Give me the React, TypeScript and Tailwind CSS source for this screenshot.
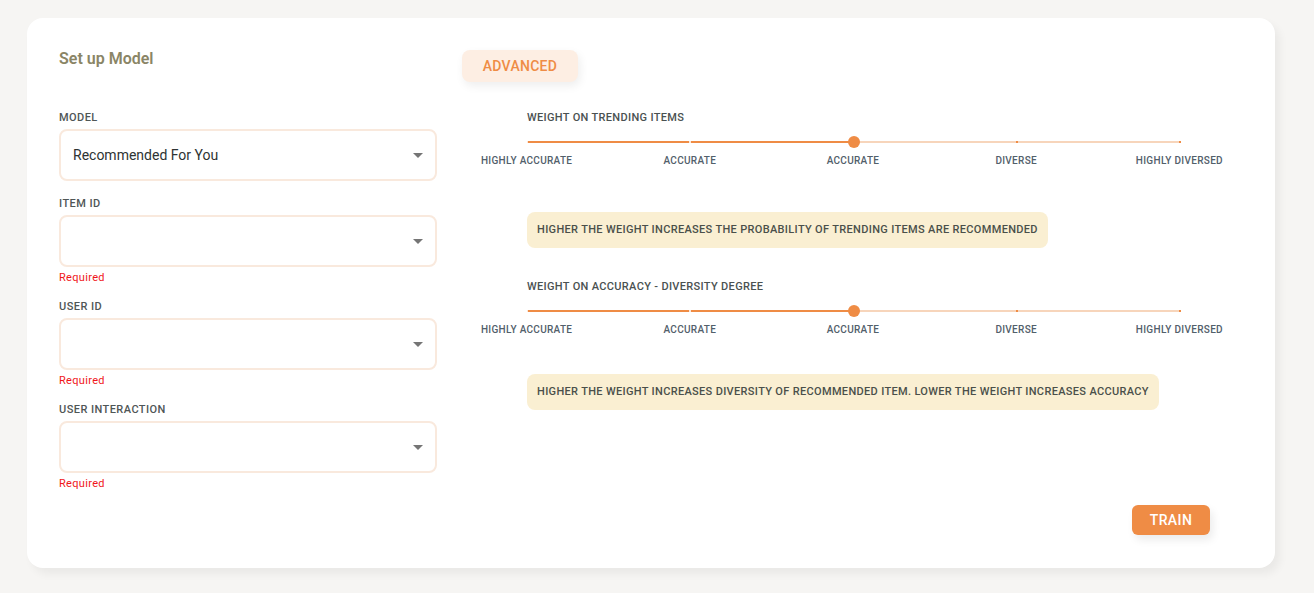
import React from "react";

const font = { fontFamily: "Roboto, 'Noto Sans', sans-serif" };

function Caret() {
  return (
    <svg width="10" height="5" viewBox="0 0 10 5" className="shrink-0">
      <path d="M0 0 L10 0 L5 5 Z" fill="#757575" />
    </svg>
  );
}

function SelectField({ label, value, required }: { label: string; value?: string; required?: boolean }) {
  return (
    <div className="flex flex-col">
      <div className="text-[11px] leading-[14px] font-medium tracking-[0.04em] text-[#4f5656] uppercase">{label}</div>
      <div className="mt-[4px] h-[52px] w-[378px] rounded-[8px] border-2 border-[#f9e9dd] flex items-center justify-between pl-[12px] pr-[12px] bg-white">
        <span className="text-[14px] text-[#2e3333]">{value ?? ""}</span>
        <Caret />
      </div>
      {required && <div className="mt-[4px] text-[11px] leading-[13px] text-[#f0161a] tracking-[0.03em]">Required</div>}
    </div>
  );
}

const marks = ["HIGHLY ACCURATE", "ACCURATE", "ACCURATE", "DIVERSE", "HIGHLY DIVERSED"];

function WeightSlider({ title, value }: { title: string; value: number }) {
  const pct = (value / 4) * 100;
  return (
    <div className="flex flex-col ml-[65px] w-[653px]">
      <div className="text-[11px] leading-[14px] font-medium tracking-[0.03em] text-[#4a5151] uppercase">{title}</div>
      <div className="relative h-[24px] mt-[5px]">
        <div className="absolute left-0 right-0 top-[11px] h-[2px] bg-[#f7d5bb]" />
        <div className="absolute left-0 top-[11px] h-[2px] bg-[#ef8c45]" style={{ width: `${pct}%` }} />
        {[0, 1, 2, 3, 4].map((i) => (
          <div
            key={i}
            className="absolute top-[11px] h-[2px] w-[2px] -ml-[1px]"
            style={{
              left: `${(i / 4) * 100}%`,
              backgroundColor: i <= value ? "rgba(255,255,255,0.8)" : "#ef8c45",
            }}
          />
        ))}
        <div
          className="absolute top-[6px] h-[12px] w-[12px] -ml-[6px] rounded-full bg-[#ef8c45]"
          style={{ left: `${pct}%` }}
        />
      </div>
      <div className="grid grid-cols-5 w-[816px] -ml-[82px] mt-[1px]">
        {marks.map((m, i) => (
          <div key={i} className="text-center text-[10px] leading-[12px] font-medium tracking-[0.03em] text-[#52606b]">
            {m}
          </div>
        ))}
      </div>
    </div>
  );
}

function Info({ text }: { text: string }) {
  return (
    <div className="flex">
      <div className="ml-[65px] h-[36px] px-[10px] flex items-center rounded-[8px] bg-[#faefd2] text-[11px] font-medium tracking-[0.03em] text-[#4a4f4a] whitespace-nowrap">
        {text}
      </div>
    </div>
  );
}

export default function App() {
  return (
    <div className="min-h-screen w-full bg-[#f6f5f3] pt-[18px] pl-[27px]" style={font}>
      <div className="w-[1248px] h-[550px] rounded-[16px] bg-white shadow-[5px_6px_8px_rgba(0,0,0,0.05)] px-[32px] pt-[32px] pb-[33px] flex gap-[25px]">
        <div className="w-[378px] flex flex-col">
          <div className="text-[16px] leading-[18px] font-semibold text-[#8a8566]">Set up Model</div>
          <div className="mt-[43px] flex flex-col gap-[16px]">
            <SelectField label="Model" value="Recommended For You" />
            <SelectField label="Item ID" required />
            <SelectField label="User ID" required />
            <SelectField label="User Interaction" required />
          </div>
        </div>
        <div className="flex-1 flex flex-col">
          <button className="self-start h-[32px] w-[116px] rounded-[8px] bg-[#fdeee3] text-[#ef8c45] text-[14px] font-medium tracking-[0.02em] shadow-[2px_4px_10px_rgba(0,0,0,0.07)]">
            ADVANCED
          </button>
          <div className="mt-[29px]">
            <WeightSlider title="Weight on trending items" value={2} />
          </div>
          <div className="mt-[45px]">
            <Info text="HIGHER THE WEIGHT INCREASES THE PROBABILITY OF TRENDING ITEMS ARE RECOMMENDED" />
          </div>
          <div className="mt-[32px]">
            <WeightSlider title="Weight on accuracy - diversity degree" value={2} />
          </div>
          <div className="mt-[38px]">
            <Info text="HIGHER THE WEIGHT INCREASES DIVERSITY OF RECOMMENDED ITEM. LOWER THE WEIGHT INCREASES ACCURACY" />
          </div>
          <div className="mt-auto flex justify-end pr-[33px]">
            <button className="h-[30px] w-[78px] rounded-[6px] bg-[#ef8c45] text-white text-[14px] font-medium tracking-[0.03em] shadow-[3px_5px_8px_rgba(0,0,0,0.08)]">
              TRAIN
            </button>
          </div>
        </div>
      </div>
    </div>
  );
}
